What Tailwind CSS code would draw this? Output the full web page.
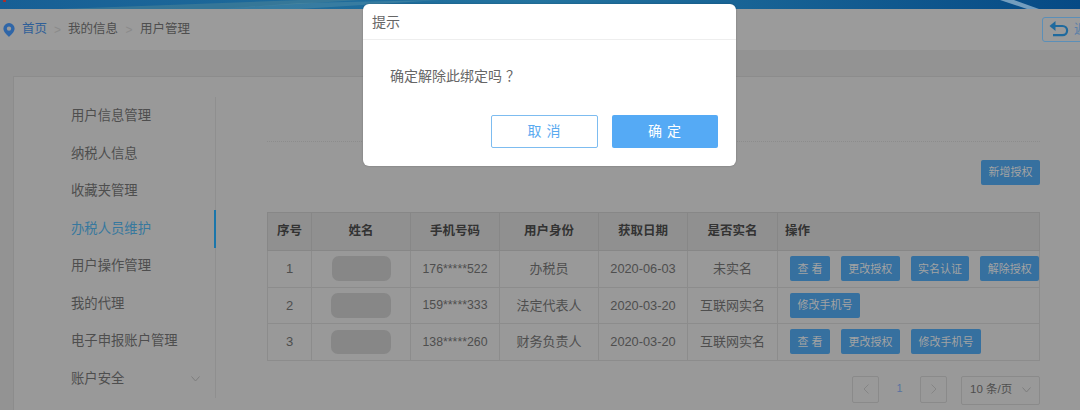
<!doctype html>
<html lang="zh"><head><meta charset="utf-8"><title>用户管理</title>
<script src="https://cdn.jsdelivr.net/npm/@tailwindcss/browser@4"></script></head>
<body class="m-0 overflow-hidden">
<div class="relative w-[1080px] h-[410px] overflow-hidden bg-[#939393] font-['Liberation_Sans','Noto_Sans_CJK_SC',sans-serif] text-[13px] text-[#4e4e4e]">
  <div class="relative h-[9px] overflow-hidden bg-gradient-to-r from-[#175f95] via-[#23739f] to-[#064a85]">
    <svg class="absolute inset-0" width="1080" height="9" viewBox="0 0 1080 9"><path d="M60 9 300 0h60L220 9Z" fill="#4a8398" opacity=".55"/><path d="M220 9 300 3 440 0 300 9Z" fill="#5c97ab" opacity=".4"/><path d="M1000 0h14l25 9h-12Z" fill="#8fb2cc" opacity=".8"/><rect x="3" y="0" width="3" height="2" fill="#a5302f"/></svg>
  </div>
  <div class="h-[41px] bg-[#9b9b9b] flex items-center justify-between pl-[3px]">
    <div class="flex items-center text-[12.5px]">
      <svg class="w-[12px] h-[14px] mr-[7px]" viewBox="0 0 12 14"><path fill="#2f66a8" fill-rule="evenodd" d="M6 0a5.6 5.6 0 0 1 5.6 5.6C11.6 9 8 12 6 14 4 12 .4 9 .4 5.6A5.6 5.6 0 0 1 6 0Zm0 3.4a2.2 2.2 0 1 0 0 4.4 2.2 2.2 0 0 0 0-4.4Z"/></svg>
      <span class="text-[#2f5f98]">首页</span><span class="w-[21px] text-center text-[#8a8a8a] text-[12px]">&gt;</span><span>我的信息</span><span class="w-[22px] text-center text-[#8a8a8a] text-[12px]">&gt;</span><span>用户管理</span>
    </div>
    <div class="w-[60px] h-[25px] -mr-[22px] mb-[1px] border border-[#5b8fb8] rounded-[3px] flex items-center pl-[6px] text-[#5a7fa8] gap-[5px] shrink-0">
      <svg class="w-[20px] h-[17px] shrink-0" viewBox="0 0 20 17"><path d="M2.5 5h11a4.6 4.6 0 0 1 0 9.2H4" fill="none" stroke="#1f6a9e" stroke-width="2.2"/><path d="M6.5 0 .5 5l6 5Z" fill="#1f6a9e"/></svg><span class="whitespace-nowrap">返回</span>
    </div>
  </div>
  <div class="mt-[26px] ml-[13px] h-[334px] bg-[#999999] border-t border-l border-[#8c8c8c] flex pt-[20px]">
    <nav class="w-[202px] h-[301px] border-r border-[#8f8f8f] flex flex-col text-[13.33px] shrink-0 pt-[0.5px]">
      <a class="h-[37.5px] flex items-center pl-[57px]">用户信息管理</a>
      <a class="h-[37.5px] flex items-center pl-[57px]">纳税人信息</a>
      <a class="h-[37.5px] flex items-center pl-[57px]">收藏夹管理</a>
      <a class="h-[37.5px] flex items-center pl-[57px] text-[#37789e] border-r-2 border-[#1a76ab] -mr-px">办税人员维护</a>
      <a class="h-[37.5px] flex items-center pl-[57px]">用户操作管理</a>
      <a class="h-[37.5px] flex items-center pl-[57px]">我的代理</a>
      <a class="h-[37.5px] flex items-center pl-[57px]">电子申报账户管理</a>
      <a class="h-[37.5px] flex items-center pl-[57px] pr-[15px] justify-between">账户安全<svg class="w-[9px] h-[6px]" viewBox="0 0 9 6"><path d="M.5.5 4.5 5 8.5.5" fill="none" stroke="#7d7d7d"/></svg></a>
    </nav>
    <main class="w-[773px] ml-[51px] shrink-0 relative">
      <div class="h-[45px] border-b border-dotted border-[#8c8c8c]"></div>
      <div class="flex justify-end mt-[18px] h-[52px]">
        <button class="w-[59px] h-[25px] rounded-[2px] bg-[#36709f] text-[#a3a3a3] text-[11px]">新增授权</button>
      </div>
      <table class="w-[773px] table-fixed border-collapse text-[13px] text-center">
        <colgroup><col class="w-[44px]"><col class="w-[99px]"><col class="w-[89px]"><col class="w-[99px]"><col class="w-[89px]"><col class="w-[90px]"><col></colgroup>
        <thead><tr class="h-[38px] bg-[#909090] text-[#333] font-bold text-[12.5px]">
          <th class="border border-[#878787]">序号</th><th class="border border-[#878787]">姓名</th><th class="border border-[#878787]">手机号码</th><th class="border border-[#878787]">用户身份</th><th class="border border-[#878787]">获取日期</th><th class="border border-[#878787]">是否实名</th><th class="border border-[#878787] text-left pl-[7px]">操作</th>
        </tr></thead>
        <tbody>
          <tr class="h-[36.5px]"><td class="border border-[#8c8c8c]">1</td><td class="border border-[#8c8c8c]"><div class="w-[59px] h-[25px] mx-auto rounded-[7px] bg-[#878787]"></div></td><td class="border border-[#8c8c8c] text-[12.3px]">176*****522</td><td class="border border-[#8c8c8c]">办税员</td><td class="border border-[#8c8c8c] text-[12.8px]">2020-06-03</td><td class="border border-[#8c8c8c]">未实名</td>
            <td class="border border-[#8c8c8c]"><div class="flex gap-[11px] pl-[12px] text-[11px] text-[#a3a3a3]"><button class="w-[40px] h-[25px] rounded-[2px] bg-[#36709f]">查 看</button><button class="w-[59px] h-[25px] rounded-[2px] bg-[#36709f]">更改授权</button><button class="w-[59px] h-[25px] rounded-[2px] bg-[#36709f]">实名认证</button><button class="w-[59px] h-[25px] rounded-[2px] bg-[#36709f]">解除授权</button></div></td></tr>
          <tr class="h-[36.5px]"><td class="border border-[#8c8c8c]">2</td><td class="border border-[#8c8c8c]"><div class="w-[60px] h-[25px] mx-auto rounded-[7px] bg-[#878787]"></div></td><td class="border border-[#8c8c8c] text-[12.3px]">159*****333</td><td class="border border-[#8c8c8c]">法定代表人</td><td class="border border-[#8c8c8c] text-[12.8px]">2020-03-20</td><td class="border border-[#8c8c8c]">互联网实名</td>
            <td class="border border-[#8c8c8c]"><div class="flex gap-[11px] pl-[12px] text-[11px] text-[#a3a3a3]"><button class="w-[70px] h-[25px] rounded-[2px] bg-[#36709f]">修改手机号</button></div></td></tr>
          <tr class="h-[36.5px]"><td class="border border-[#8c8c8c]">3</td><td class="border border-[#8c8c8c]"><div class="w-[60px] h-[24px] mx-auto rounded-[7px] bg-[#878787]"></div></td><td class="border border-[#8c8c8c] text-[12.3px]">138*****260</td><td class="border border-[#8c8c8c]">财务负责人</td><td class="border border-[#8c8c8c] text-[12.8px]">2020-03-20</td><td class="border border-[#8c8c8c]">互联网实名</td>
            <td class="border border-[#8c8c8c]"><div class="flex gap-[11px] pl-[12px] text-[11px] text-[#a3a3a3]"><button class="w-[40px] h-[25px] rounded-[2px] bg-[#36709f]">查 看</button><button class="w-[59px] h-[25px] rounded-[2px] bg-[#36709f]">更改授权</button><button class="w-[70px] h-[25px] rounded-[2px] bg-[#36709f]">修改手机号</button></div></td></tr>
        </tbody>
      </table>
      <div class="flex justify-end items-start mt-[15px] text-[12px]">
        <div class="w-[27px] h-[27px] border border-[#8a8a8a] rounded-[2px] flex items-center justify-center"><svg class="w-[6px] h-[10px]" viewBox="0 0 6 10"><path d="M5.5.5 1 5l4.5 4.5" fill="none" stroke="#858585"/></svg></div>
        <span class="w-[41px] text-center text-[#5a73a0] text-[11px] leading-[24px]">1</span>
        <div class="w-[27px] h-[27px] border border-[#8a8a8a] rounded-[2px] flex items-center justify-center"><svg class="w-[6px] h-[10px]" viewBox="0 0 6 10"><path d="M.5.5 5 5 .5 9.5" fill="none" stroke="#858585"/></svg></div>
        <div class="w-[79px] h-[29px] ml-[14px] border border-[#8a8a8a] rounded-[2px] flex items-center justify-between pl-[8px] pr-[8px] text-[11.5px]">10 条/页<svg class="w-[9px] h-[6px]" viewBox="0 0 9 6"><path d="M.5.5 4.5 5 8.5.5" fill="none" stroke="#7d7d7d"/></svg></div>
      </div>
    </main>
  </div>
  <div class="absolute left-[363px] top-[4px] w-[373px] h-[162px] bg-white rounded-[6px] shadow-[0_0_2px_rgba(0,0,0,0.25)] text-[#666]">
    <div class="h-[36px] border-b border-[#eeeeee] flex items-center pl-[9px] pt-[1px] text-[14px]">提示</div>
    <div class="pl-[27px] pt-[26px] text-[14px] leading-[20px] h-[75px]">确定解除此绑定吗<span class="ml-[4px]">？</span></div>
    <div class="flex justify-end gap-[14px] pr-[18px]">
      <button class="w-[107px] h-[33px] rounded-[2px] border border-[#7dbcf0] bg-white text-[#5aaaf0] text-[14px] tracking-[5px] pl-[4px]">取消</button>
      <button class="w-[106px] h-[33px] rounded-[2px] bg-[#55aaf5] text-white text-[14px] tracking-[5px] pl-[4px]">确定</button>
    </div>
  </div>
</div>
</body></html>
